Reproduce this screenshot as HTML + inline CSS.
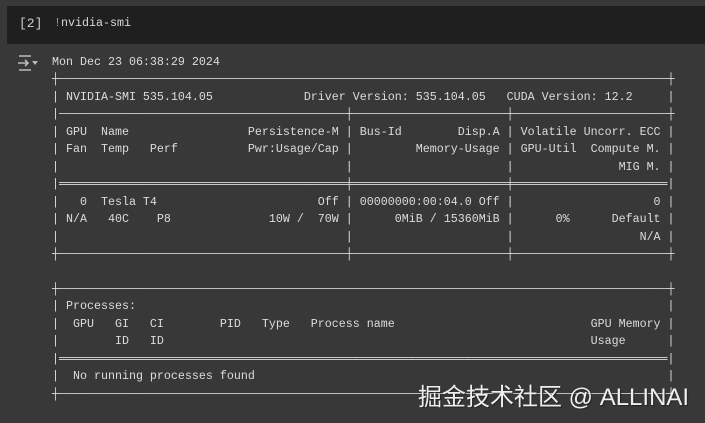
<!DOCTYPE html>
<html><head><meta charset="utf-8"><style>
html,body{margin:0;padding:0;width:705px;height:423px;overflow:hidden;background:#383838;}
.in{position:absolute;left:7px;top:6px;width:698px;height:38px;background:#1f1f1f;}
.num{position:absolute;left:19px;top:16px;color:#cfcfcf;font:13px "Liberation Mono",monospace;}
.cmd{position:absolute;left:54px;top:16px;color:#d8d8d8;font:11.67px "Liberation Mono",monospace;}
.cmd b{color:#4fb4d8;font-weight:normal}
pre{position:absolute;left:52px;top:54px;margin:0;color:#dcdcdc;font:11.67px/17.45px "Liberation Mono","DejaVu Sans Mono",monospace;}
.ic{position:absolute;left:17px;top:54px;}
.wm{position:absolute;left:418px;top:377px;color:#eee;font:24px "Liberation Sans","Noto Sans CJK SC",sans-serif;text-shadow:1px 1px 1px #222;white-space:nowrap;}
</style></head><body>
<div class="in"></div>
<div class="num">[2]</div>
<div class="cmd"><b>!</b>nvidia-smi</div>
<svg class="ic" width="22" height="18" viewBox="0 0 22 18" fill="none" stroke="#bbb" stroke-width="1.6"><path d="M2 2h12M2 16h12M1 9h10M8 6l3 3-3 3"/><path d="M15 7h6l-3 4z" fill="#bbb" stroke="none"/></svg>
<pre>Mon Dec 23 06:38:29 2024       
┼───────────────────────────────────────────────────────────────────────────────────────┼
| NVIDIA-SMI 535.104.05             Driver Version: 535.104.05   CUDA Version: 12.2     |
|─────────────────────────────────────────┼──────────────────────┼──────────────────────┼
| GPU  Name                 Persistence-M | Bus-Id        Disp.A | Volatile Uncorr. ECC |
| Fan  Temp   Perf          Pwr:Usage/Cap |         Memory-Usage | GPU-Util  Compute M. |
|                                         |                      |               MIG M. |
|═════════════════════════════════════════╪══════════════════════╪══════════════════════|
|   0  Tesla T4                       Off | 00000000:00:04.0 Off |                    0 |
| N/A   40C    P8              10W /  70W |      0MiB / 15360MiB |      0%      Default |
|                                         |                      |                  N/A |
┼─────────────────────────────────────────┼──────────────────────┼──────────────────────┼
                                                                                         
┼───────────────────────────────────────────────────────────────────────────────────────┼
| Processes:                                                                            |
|  GPU   GI   CI        PID   Type   Process name                            GPU Memory |
|        ID   ID                                                             Usage      |
|═══════════════════════════════════════════════════════════════════════════════════════|
|  No running processes found                                                           |
┼───────────────────────────────────────────────────────────────────────────────────────┼</pre>
<div class="wm">掘金技术社区 @ ALLINAI</div>
</body></html>
